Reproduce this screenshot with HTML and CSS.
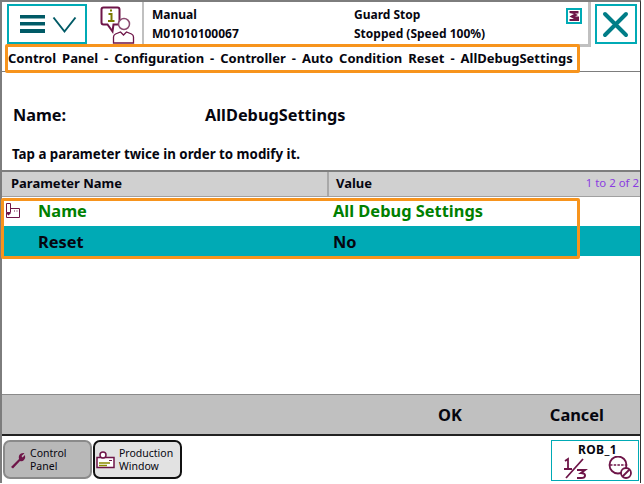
FILE: index.html
```html
<!DOCTYPE html>
<html lang="en">
<head>
<meta charset="utf-8">
<title>AllDebugSettings</title>
<link rel="stylesheet" href="styles.css">
</head>
<body>
<div class="app">
  <header class="top">
    <button class="menu" aria-label="Menu">
      <svg width="76" height="36" viewBox="0 0 76 36">
        <path d="M11 9h25v3.500H11zM11 16h25v3.500H11zM11 23h25v4H11z" fill="#005a66"/>
        <path d="M44.500 11.500L55.500 25.500 66.500 11.500" fill="none" stroke="#005a66" stroke-width="2"/>
      </svg>
    </button>
    <svg class="info" width="38" height="38" viewBox="0 0 38 38">
      <path d="M3.500 1.500h14q2 0 2 2v13q0 2-2 2h-4l-1 7-5-7h-4q-2 0-2-2v-13q0-2 2-2z" fill="#fff" stroke="#6e1548" stroke-width="2"/>
      <path d="M11 3.500v2M8.500 8h3v7M8 15h6.500" fill="none" stroke="#7a7a00" stroke-width="2"/>
      <circle cx="24" cy="18" r="5.500" fill="#fff" stroke="#8a4a70" stroke-width="1.500"/>
      <path d="M13.500 37v-6q0-2 2-3l5-2 3 3 3-3 5 2q2 1 2 3v6z" fill="#fff" stroke="#6e1548" stroke-width="1.300"/>
    </svg>
    <div class="status">
      <div class="col col-a"><span>Manual</span><span>M01010100067</span></div>
      <div class="col col-b"><span>Guard Stop</span><span>Stopped (Speed 100%)</span></div>
      <svg class="flag" width="16" height="16" viewBox="0 0 16 16">
        <rect x="1" y="1" width="14" height="14" fill="#fff" stroke="#00aab5" stroke-width="2"/>
        <path d="M3.500 3h9v2.500H9l3 1.500-3 1.500h4V13H3.500v-2H8L3.500 8.500 8 6 3.500 5z" fill="#6e1548"/>
      </svg>
    </div>
    <button class="close" aria-label="Close">
      <svg width="38" height="36" viewBox="0 0 38 36">
        <path d="M8 8l21 21M29 8L8 29" stroke="#007d87" stroke-width="4" stroke-linecap="round"/>
      </svg>
    </button>
  </header>

  <nav class="crumb-row">
    <div class="crumbs">Control Panel - Configuration - Controller - Auto Condition Reset - AllDebugSettings</div>
  </nav>

  <main class="main">
    <div class="name-row"><span class="name-label">Name:</span><span>AllDebugSettings</span></div>
    <p class="hint">Tap a parameter twice in order to modify it.</p>
    <div class="table">
      <div class="thead">
        <div class="th th-a">Parameter Name</div>
        <div class="th th-b">Value<span class="pager">1 to 2 of 2</span></div>
      </div>
      <div class="row row-green">
        <svg class="row-icon" width="16" height="17" viewBox="0 0 16 17">
          <path d="M1.500 .500h4v9h-4zM5.500 5.500h9v9h-13v-5M9 8h1M11.500 8h1" fill="none" stroke="#6e1548"/>
          <path d="M1 10h5l-2.500 2.500z" fill="#6e1548"/>
        </svg>
        <span class="cell-a">Name</span><span class="cell-b">All Debug Settings</span>
      </div>
      <div class="row row-sel"><span class="cell-a">Reset</span><span class="cell-b">No</span></div>
      <div class="highlight"></div>
    </div>
  </main>

  <div class="actions">
    <span class="act act-ok">OK</span>
    <span class="act act-cancel">Cancel</span>
  </div>

  <footer class="tasks">
    <div class="tab tab-off">
      <svg width="18" height="18" viewBox="0 0 18 18"><path d="M2 16l8-8q-1-4 2-5.500 2-.8 3.500-.2L12.500 5l1 1.500L16 4q.8 3-1 5t-4 1l-7 7.500z" fill="#6e1548"/></svg>
      <span>Control<br>Panel</span>
    </div>
    <div class="tab tab-on">
      <svg width="20" height="18" viewBox="0 0 20 18">
        <path d="M1 6.500h17v10H1z" fill="#fff" stroke="#6e1548" stroke-width="1.500"/>
        <path d="M3 12h11M3 14.500h8" stroke="#8a8a00" stroke-width="1.500"/>
        <path d="M13 9.500h3" stroke="#6e1548"/>
        <circle cx="7" cy="4" r="3" fill="#fff" stroke="#6e1548" stroke-width="1.500"/>
      </svg>
      <span>Production<br>Window</span>
    </div>
    <div class="rob">
      <span class="rob-name">ROB_1</span>
      <svg width="86" height="25" viewBox="0 0 86 25">
        <path d="M13 5l3-2v10M12 13h8M31 3L14 22" fill="none" stroke="#6e1548" stroke-width="1.800"/>
        <path d="M25 14h8l-4 3q4 0 4 2.500t-4 2.500h-4" fill="none" stroke="#6e1548" stroke-width="2"/>
        <circle cx="66" cy="9" r="8.500" fill="none" stroke="#6e1548" stroke-width="1.800"/>
        <path d="M58 9h16" stroke="#6e1548" stroke-width="1.500" stroke-dasharray="2.500 1.200"/>
        <circle cx="74" cy="17" r="5" fill="#fff" stroke="#6e1548" stroke-width="1.800"/>
        <path d="M70.500 20.500l7-7" stroke="#6e1548" stroke-width="1.800"/>
      </svg>
    </div>
  </footer>
</div>
</body>
</html>
```
FILE: styles.css
```css
* { box-sizing: border-box; }
html, body { margin: 0; padding: 0; }
body {
  width: 644px;
  height: 484px;
  background: #fff;
  font-family: "Noto Sans", "DejaVu Sans", sans-serif;
  color: #06060f;
  overflow: hidden;
}
.app {
  width: 641px;
  height: 483px;
  border-top: 2px solid #7d7d7d;
  border-left: 2px solid #7d7d7d;
  border-right: 1px solid #333;
  display: flex;
  flex-direction: column;
  background: #fff;
}
button { padding: 0; background: #fff; font: inherit; }

/* top bar */
.top { display: flex; height: 42px; align-items: flex-start; }
.menu {
  width: 80px;
  height: 40px;
  margin: 2px 0 0 5px;
  border: 2px solid #00aab5;
  display: flex;
  align-items: center;
  flex: none;
}
.menu svg { display: block; flex: none; }
.info { display: block; margin: 4px 0 0 13px; flex: none; }
.status {
  width: 449px;
  height: 45px;
  margin-left: 4px;
  border-left: 2px solid #c0c0c0;
  border-right: 3px solid #c0c0c0;
  border-bottom: 3px solid #c0c0c0;
  display: flex;
  font-size: 12px;
  font-weight: 700;
  flex: none;
}
.col { display: flex; flex-direction: column; gap: 3px; padding-top: 5px; line-height: 16px; white-space: nowrap; }
.col-a { width: 202px; margin-left: 8px; }
.col-b { width: 212px; }
.flag { margin-top: 6px; flex: none; }
.close {
  width: 42px;
  height: 40px;
  margin: 2px 0 0 4px;
  border: 2px solid #00aab5;
  display: flex;
  align-items: center;
  justify-content: center;
  flex: none;
}

/* breadcrumb */
.crumb-row { height: 28px; border-bottom: 1px solid #7d7d7d; flex: none; }
.crumbs {
  position: relative;
  z-index: 2;
  width: 575px;
  height: 29px;
  margin-left: 3px;
  border: 3px solid #f7941d;
  border-radius: 2px;
  background: #fff;
  font-size: 13px;
  font-weight: 700;
  line-height: 23px;
  word-spacing: 2.600px;
  white-space: nowrap;
}

/* body */
.main { flex: 1; display: flex; flex-direction: column; }
.name-row {
  display: flex;
  padding: 31px 0 0 11px;
  height: 63px;
  font-size: 16.300px;
  font-weight: 700;
  line-height: 24px;
}
.name-label { width: 192px; }
.hint { margin: 10px 0 0 10px; font-size: 13.300px; font-weight: 700; line-height: 18px; }
.table { position: relative; margin-top: 7px; }
.thead {
  display: flex;
  height: 27px;
  border-top: 2px solid #7d7d7d;
  border-bottom: 1px solid #a0a0a0;
  background: #d0d0d0;
  font-size: 13px;
  font-weight: 700;
  line-height: 22px;
}
.th { position: relative; }
.th-a { width: 327px; padding-left: 9px; border-right: 2px solid #a8a8a8; }
.th-b { flex: 1; padding-left: 7px; display: flex; justify-content: space-between; }
.pager { color: #8a3ce0; font-size: 11.400px; font-weight: 400; padding-right: 1px; }
.row {
  display: flex;
  align-items: center;
  font-size: 16.400px;
  font-weight: 700;
  position: relative;
}
.row-green { height: 29px; padding-bottom: 2px; color: #008000; }
.row-sel { height: 30px; background: #00aab5; color: #06060f; }
.cell-a { width: 295px; margin-left: 36px; }
.cell-b { flex: 1; }
.row-icon { position: absolute; left: 3px; top: 6px; }
.highlight {
  position: absolute;
  left: -1px;
  top: 28px;
  width: 579px;
  height: 61px;
  border: 3px solid #f7941d;
  border-radius: 2px;
  pointer-events: none;
}

/* action bar */
.actions {
  flex: none;
  height: 42px;
  background: #c0c0c0;
  border-top: 1px solid #8a8a8a;
  border-bottom: 2px solid #222;
  display: flex;
  align-items: center;
  font-size: 16.400px;
  font-weight: 700;
}
.act-ok { margin-left: 436px; }
.act-cancel { margin-left: 88px; }

/* task bar */
.tasks { flex: none; height: 47px; display: flex; align-items: flex-start; padding: 4px 0 0 1px; }
.tab {
  width: 89px;
  height: 39px;
  border-radius: 7px;
  display: flex;
  align-items: center;
  font-size: 10.500px;
  line-height: 13px;
}
.tab svg { flex: none; }
.tab-off {
  background: #b8b8b8;
  border: 2px solid #8a8a8a;
  padding-left: 4px;
  gap: 3px;
}
.tab-on {
  background: #e2e2e2;
  border: 2px solid #111;
  margin-left: 1px;
  padding-left: 1px;
  gap: 3px;
}
.rob {
  width: 88px;
  height: 41px;
  margin-left: 369px;
  border: 1px solid #00aab5;
  display: flex;
  flex-direction: column;
  align-items: center;
  font-size: 12px;
  font-weight: 700;
  line-height: 15px;
  letter-spacing: .4px;
}
.rob-name { padding: 1px 0 0 5px; }
.rob svg { display: block; flex: none; margin-top: -1px; }
```
